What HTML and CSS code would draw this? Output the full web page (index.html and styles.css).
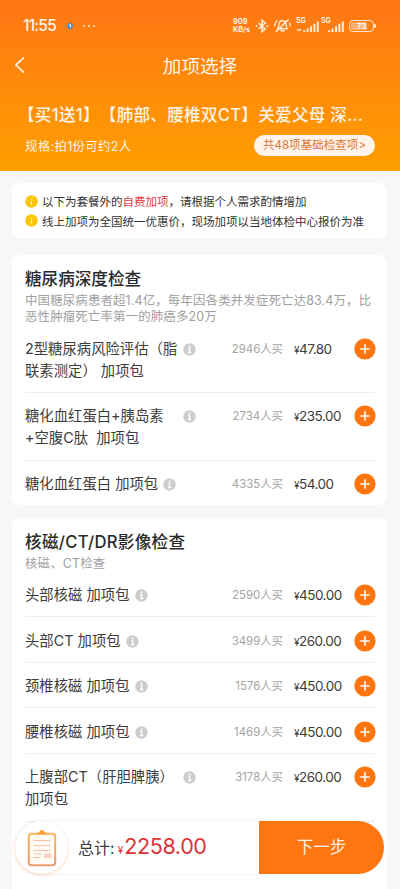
FILE: index.html
```html
<!DOCTYPE html>
<html lang="zh-CN">
<head>
<meta charset="utf-8">
<title>加项选择</title>
<link rel="stylesheet" href="styles.css">
</head>
<body>
<svg class="defs" width="0" height="0">
  <symbol id="info" viewBox="0 0 13 13"><circle cx="6.5" cy="6.5" r="6.2" fill="#cdcdcd"/><circle cx="6.5" cy="3.6" r="1" fill="#fff"/><path d="M5.2 5.6h1.4v3.8M4.9 9.5h3.4" fill="none" stroke="#fff" stroke-width="1.3"/></symbol>
  <symbol id="plus" viewBox="0 0 22 22"><circle cx="11" cy="11" r="10.6" fill="#ff7611"/><path d="M11 6.9v8.2M6.9 11h8.2" stroke="#fff" stroke-width="1.6" stroke-linecap="round"/></symbol>
  <symbol id="signal" viewBox="0 0 17 11"><path d="M1.2 9.2V11M4.6 7.4V11M8 5.2V11M11.4 2.8V11M14.8 .4V11" stroke="#ffeedd" stroke-width="2"/></symbol>
  <symbol id="notice" viewBox="0 0 13 13"><circle cx="6.5" cy="6.5" r="6.2" fill="#fec506"/><path d="M6.5 3.3v1.3M6.5 5.7v4" stroke="#fff3c4" stroke-width="1.2"/></symbol>
</svg>
<header class="header">
  <div class="status">
    <span class="time">11:55</span>
    <svg class="app-dot" viewBox="0 0 8 8"><circle cx="4" cy="4" r="3.1" fill="#4c8fc9"/><path d="M3.3 3.2 4.4 2.6V5.4" fill="none" stroke="#fff" stroke-width="1"/></svg>
    <span class="more"><i></i><i></i><i></i></span>
    <span class="speed"><span>909</span><span>KB/s</span></span>
    <svg class="bluetooth" viewBox="0 0 14 14"><path d="M3.5 4 10.2 9.9 7 12.7V1.3L10.2 4 3.5 10" fill="none" stroke="#ffeedd" stroke-width="1.5"/><circle cx="1.7" cy="7" r="1" fill="#ffeedd"/><circle cx="12.3" cy="7" r="1" fill="#ffeedd"/></svg>
    <svg class="bell" viewBox="0 0 17 15"><path d="M3.8 10.7c1-1.4 1-2 1.1-4.2.2-2.2 1.6-3.7 3.6-3.7s3.4 1.5 3.6 3.7c.1 2.2.2 2.8 1.1 4.2zM7 12.8h3M2.2 13.6 14.5 1.4M1.2 5.3l-.5 2.6M15.7 5.3l.5 2.6M1.8 4l1-1.3" fill="none" stroke="#ffeedd" stroke-width="1.4" stroke-linecap="round"/></svg>
    <span class="net"><b>5G</b><em></em><svg class="bars"><use href="#signal"/></svg></span>
    <span class="net second"><b>5G</b><svg class="bars"><use href="#signal"/></svg></span>
    <span class="battery"><span>73</span></span>
  </div>
  <div class="nav">
    <svg class="back" viewBox="0 0 12 18"><path d="M10 1.3 2 9l8 7.7" fill="none" stroke="#fff3e5" stroke-width="1.7"/></svg>
    <h1>加项选择</h1>
  </div>
  <div class="product">【买1送1】【肺部、腰椎双CT】关爱父母 深...</div>
  <div class="spec"><span>规格:拍1份可约2人</span><a class="pill">共48项基础检查项&gt;</a></div>
</header>
<main>
  <section class="card tips">
    <p><svg><use href="#notice"/></svg><span>以下为套餐外的<em>自费加项</em>，请根据个人需求酌情增加</span></p>
    <p><svg><use href="#notice"/></svg><span>线上加项为全国统一优惠价，现场加项以当地体检中心报价为准</span></p>
  </section>
  <section class="card group">
    <h2>糖尿病深度检查</h2>
    <p class="desc">中国糖尿病患者超1.4亿，每年因各类并发症死亡达83.4万，比<br>恶性肿瘤死亡率第一的肺癌多20万</p>
    <div class="item"><span class="name wide">2型糖尿病风险评估（脂<br>联素测定） 加项包</span><svg class="info"><use href="#info"/></svg><span class="sold">2946人买</span><span class="price"><small>¥</small>47.80</span><svg class="add"><use href="#plus"/></svg></div>
    <div class="item"><span class="name wide">糖化血红蛋白+胰岛素<br>+空腹C肽&nbsp; 加项包</span><svg class="info"><use href="#info"/></svg><span class="sold">2734人买</span><span class="price"><small>¥</small>235.00</span><svg class="add"><use href="#plus"/></svg></div>
    <div class="item"><span class="name">糖化血红蛋白 加项包</span><svg class="info"><use href="#info"/></svg><span class="sold">4335人买</span><span class="price"><small>¥</small>54.00</span><svg class="add"><use href="#plus"/></svg></div>
  </section>
  <section class="card group last">
    <h2 class="mixed">核磁/CT/DR影像检查</h2>
    <p class="desc">核磁、CT检查</p>
    <div class="item"><span class="name">头部核磁 加项包</span><svg class="info"><use href="#info"/></svg><span class="sold">2590人买</span><span class="price"><small>¥</small>450.00</span><svg class="add"><use href="#plus"/></svg></div>
    <div class="item"><span class="name">头部CT 加项包</span><svg class="info"><use href="#info"/></svg><span class="sold">3499人买</span><span class="price"><small>¥</small>260.00</span><svg class="add"><use href="#plus"/></svg></div>
    <div class="item"><span class="name">颈椎核磁 加项包</span><svg class="info"><use href="#info"/></svg><span class="sold">1576人买</span><span class="price"><small>¥</small>450.00</span><svg class="add"><use href="#plus"/></svg></div>
    <div class="item"><span class="name">腰椎核磁 加项包</span><svg class="info"><use href="#info"/></svg><span class="sold">1469人买</span><span class="price"><small>¥</small>450.00</span><svg class="add"><use href="#plus"/></svg></div>
    <div class="item"><span class="name wide">上腹部CT（肝胆脾胰）<br>加项包</span><svg class="info"><use href="#info"/></svg><span class="sold">3178人买</span><span class="price"><small>¥</small>260.00</span><svg class="add"><use href="#plus"/></svg></div>
  </section>
</main>
<footer class="bar">
  <div class="clip">
    <svg viewBox="0 0 30 38">
      <defs><linearGradient id="g" x1="0" y1="0" x2="0" y2="1"><stop offset="0" stop-color="#f5b65f"/><stop offset="1" stop-color="#ee9870"/></linearGradient></defs>
      <rect x="1.8" y="4.8" width="26.4" height="31.4" rx="2.6" fill="#fffaf4" stroke="url(#g)" stroke-width="2"/>
      <path d="M10.5 5.5V4.2q0-1 1-1h.6a3 3 0 0 1 5.8 0h.6q1 0 1 1v1.3z" fill="#f5a43c"/>
      <path d="M6.5 11.5h17M6.5 16.5h17M6.5 21.5h17M6.5 25h8M6.5 28.5h7" stroke="#f5c3a4" stroke-width="1.2"/>
      <rect x="17" y="24.5" width="7.5" height="4.5" rx="1" fill="#f9d3bd"/>
    </svg>
  </div>
  <div class="total"><span>总计:</span><small>¥</small><strong>2258.00</strong></div>
  <a class="next">下一步</a>
</footer>
</body>
</html>
```
FILE: styles.css
```css
* { box-sizing: border-box; }
body {
  margin: 0;
  width: 400px;
  height: 889px;
  overflow: hidden;
  background: #f7f7f7;
  color: #3c3c3c;
  font-family: Inter, "Noto Sans CJK SC", sans-serif;
  text-spacing-trim: space-all;
  white-space: nowrap;
}
h1, h2, p { margin: 0; font-weight: 400; }
em, i { font-style: normal; }
svg { display: block; flex: none; }
.defs { position: absolute; }

.header {
  height: 171px;
  background: linear-gradient(#ff7614, #ff9f00);
  color: #fff3e5;
}
.status { display: flex; align-items: center; height: 51px; padding: 0 26px 0 23px; }
.time { width: 43px; font-size: 15.5px; font-weight: 500; letter-spacing: -.75px; }
.app-dot { width: 8px; height: 8px; margin-top: 1px; margin-right: 9px; }
.more { display: flex; gap: 3px; }
.more i { width: 2px; height: 2px; border-radius: 50%; background: #ffe6cf; }
.speed { display: flex; flex-direction: column; margin-left: auto; width: 20px; font-size: 7.3px; line-height: 8px; font-weight: 700; }
.bluetooth { width: 14px; height: 14px; margin-left: 2px; }
.bell { width: 17px; height: 15px; margin-left: 5px; }
.net { position: relative; width: 24px; height: 13px; margin-left: 5px; }
.net.second { margin-left: 1px; }
.net b { position: absolute; left: 0; top: -2px; font-size: 7px; line-height: 8px; }
.net em { position: absolute; left: 1px; bottom: 1px; width: 4px; height: 2px; background: #ffd6b0; }
.bars { position: absolute; right: 0; bottom: 0; width: 17px; height: 11px; }
.battery { position: relative; width: 25px; height: 12px; margin-left: 4px; padding: 1px; border: 1.4px solid #ffe5cb; border-radius: 4px; }
.battery::after { content: ""; position: absolute; right: -3px; top: 3px; width: 2px; height: 4px; border-radius: 1px; background: #ffe5cb; }
.battery span { display: block; height: 8px; background: linear-gradient(90deg, #ffb070 75%, transparent 75%); border-radius: 2px; font-size: 8px; line-height: 8px; font-weight: 700; text-align: center; color: #fff8ef; }
.nav { position: relative; display: flex; align-items: center; justify-content: center; height: 30px; }
.back { position: absolute; left: 14px; top: 5px; width: 12px; height: 18px; }
h1 { font-size: 18.6px; line-height: 30px; }
.product { margin-top: 21px; padding-left: 18px; font-size: 16.6px; line-height: 26px; font-weight: 500; letter-spacing: .27px; }
.spec { display: flex; align-items: center; justify-content: space-between; padding: 0 25px; margin-top: 7px; height: 21px; font-size: 12.4px; letter-spacing: .35px; }
.pill { width: 121px; height: 21px; border-radius: 11px; background: #fff3ea; color: #dd7632; font-size: 11.5px; line-height: 21px; text-align: center; letter-spacing: .05px; }

main { padding: 12px 13px 0 12px; }
.card { background: #fff; border-radius: 8px; padding: 0 12px 0 13px; }
.tips { height: 56px; padding-top: 8.5px; margin-bottom: 16px; }
.tips p { display: flex; align-items: center; gap: 4px; height: 19.5px; font-size: 11.5px; color: #333; }
.tips svg { width: 13px; height: 13px; }
.tips em { color: #df3c3e; }
.group { padding-top: 13px; margin-bottom: 12.6px; }
.group.last { height: 380px; margin-bottom: 0; padding-top: 13.5px; border-radius: 8px 8px 0 0; }
.group.last .desc { margin-bottom: -.8px; }
h2 { font-size: 16.6px; line-height: 22px; font-weight: 500; color: #292929; }
h2.mixed { letter-spacing: .3px; }
.desc { margin-top: 2.6px; font-size: 12.45px; line-height: 16.4px; letter-spacing: .14px; color: #a0a0a0; }
.item { display: flex; align-items: flex-start; padding: 12.3px 0 10.2px; font-size: 14.3px; line-height: 22.1px; border-bottom: 1px solid #ededed; }
.group:not(.last) .item:last-child { border: 0; }
.name { margin-right: 5px; letter-spacing: .05px; }
.name.wide { width: 153px; }
.info { width: 13px; height: 13px; margin-top: 5px; }
.sold { margin-left: auto; margin-right: 11px; font-size: 11.4px; color: #a4a4a4; }
.price { width: 60px; height: 22.1px; font-size: 13.5px; letter-spacing: -.5px; }
.price small { font-size: 10px; line-height: 1; }
.add { width: 22px; height: 22px; margin-right: -1px; }

.bar { position: absolute; left: 15px; top: 821px; display: flex; width: 369px; height: 53px; border-radius: 27px; background: #fff; box-shadow: 0 0 3px rgba(0,0,0,.08); }
.clip { display: flex; align-items: center; justify-content: center; width: 53px; height: 53px; border-radius: 50%; background: #fff; box-shadow: 0 1px 3px rgba(244,126,62,.35); }
.clip svg { width: 30px; height: 38px; }
.total { display: flex; align-items: baseline; width: 191px; padding-left: 10px; font-size: 16px; line-height: 51px; }
.total small { margin: 0 1px 0 3px; font-size: 10px; color: #dc3438; }
.total strong { font-size: 21.6px; font-weight: 400; letter-spacing: -.4px; color: #dc3438; }
.next { width: 125px; border-radius: 0 27px 27px 0; background: #ff7611; color: #fff3e5; font-size: 16.5px; line-height: 53px; text-align: center; }
```
